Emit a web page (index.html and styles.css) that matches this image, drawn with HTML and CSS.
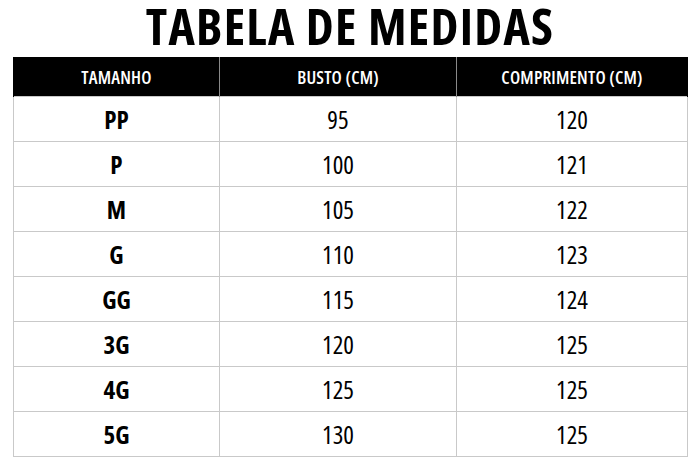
FILE: index.html
```html
<!DOCTYPE html>
<html lang="pt">
<head>
<meta charset="utf-8">
<title>Tabela de Medidas</title>
<link rel="stylesheet" href="styles.css">
</head>
<body>
<main class="page">
  <h1 class="title">TABELA DE MEDIDAS</h1>
  <table class="sizes">
    <thead>
      <tr><th class="c1">TAMANHO</th><th class="c2">BUSTO (CM)</th><th class="c3">COMPRIMENTO (CM)</th></tr>
    </thead>
    <tbody>
      <tr><td class="size">PP</td><td>95</td><td>120</td></tr>
      <tr><td class="size">P</td><td>100</td><td>121</td></tr>
      <tr><td class="size">M</td><td>105</td><td>122</td></tr>
      <tr><td class="size">G</td><td>110</td><td>123</td></tr>
      <tr><td class="size">GG</td><td>115</td><td>124</td></tr>
      <tr><td class="size">3G</td><td>120</td><td>125</td></tr>
      <tr><td class="size">4G</td><td>125</td><td>125</td></tr>
      <tr><td class="size">5G</td><td>130</td><td>125</td></tr>
    </tbody>
  </table>
</main>
</body>
</html>
```
FILE: styles.css
```css
html, body {
  margin: 0;
  padding: 0;
  background: #ffffff;
}
body {
  font-family: "Open Sans", "DejaVu Sans", sans-serif;
  font-stretch: 75%;
  color: #000;
}
.page {
  width: 700px;
  height: 467px;
  display: flex;
  flex-direction: column;
  align-items: center;
}
.title {
  margin: 0;
  padding: 0 0 5px 0;
  font-size: 50px;
  line-height: 52px;
  font-weight: 700;
  letter-spacing: 1.3px;
}
.sizes {
  width: 675px;
  border-collapse: collapse;
  margin-left: 1px;
}
.sizes th {
  background: #000;
  color: #fff;
  font-weight: 600;
  font-size: 18px;
  letter-spacing: 0.2px;
  height: 39px;
  padding: 0;
  border-left: 1px solid #8a8a8a;
  border-right: 1px solid #8a8a8a;
}
.sizes th:first-child { border-left: 1px solid #000; }
.sizes th:last-child { border-right: 1px solid #000; }
.sizes .c1 { width: 205px; }
.sizes .c2 { width: 236px; }
.sizes td {
  border: 1.5px solid #c9c9c9;
  text-align: center;
  font-size: 25px;
  line-height: 28px;
  height: 44px;
  padding: 0;
}
.sizes td.size {
  font-weight: 700;
}
```
